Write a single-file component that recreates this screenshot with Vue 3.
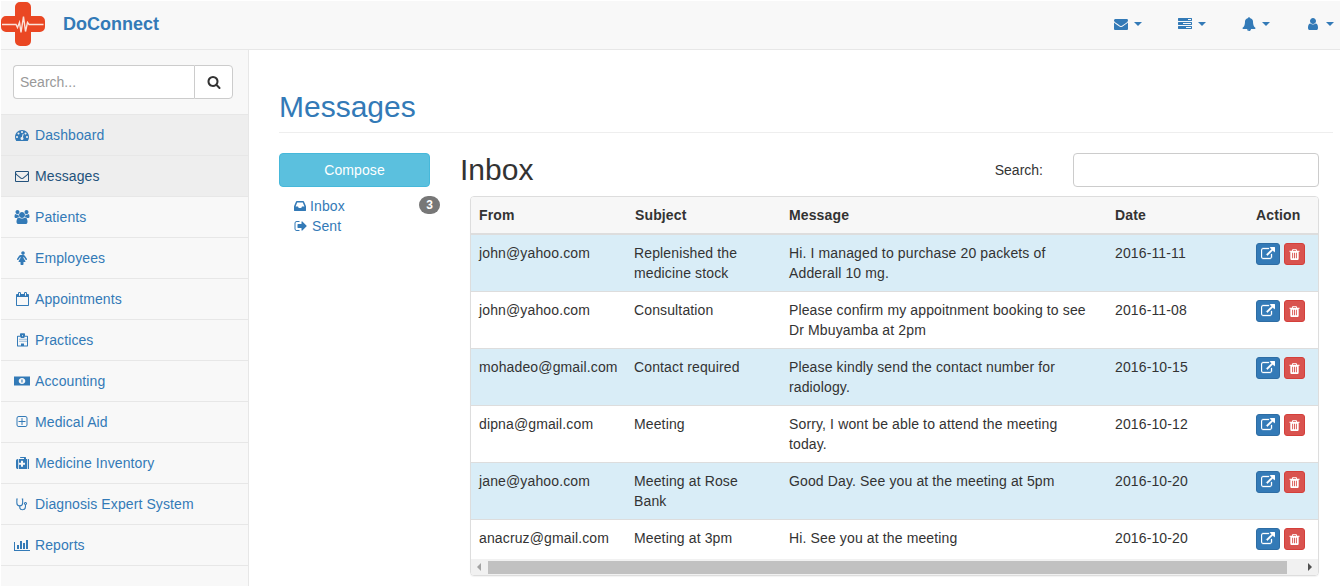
<script setup>
const P = {
  search: [1792, 'M1216 832q0-185-131.500-316.500t-316.500-131.500-316.500 131.500-131.500 316.500 131.500 316.500 316.500 131.500 316.500-131.500 131.500-316.500zm512 832q0 52-38 90t-90 38q-54 0-90-38l-343-342q-179 124-399 124-143 0-273.500-55.500t-225-150-150-225-55.500-273.500 55.500-273.500 150-225 225-150 273.500-55.500 273.500 55.500 225 150 150 225 55.500 273.500q0 220-124 399l343 343q37 37 37 90z'],
  envelope: [1792, 'M1792 710v794q0 66-47 113t-113 47h-1472q-66 0-113-47t-47-113v-794q44 49 101 87 362 246 497 345 57 42 92.500 65.500t94.500 48 110 24.500h2q51 0 110-24.500t94.500-48 92.500-65.500q170-123 498-345 57-39 100-87zm0-294q0 79-49 151t-122 123q-376 261-468 325-10 7-42.500 30.500t-54 38-52 32.500-57.500 27-50 9h-2q-23 0-50-9t-57.500-27-52-32.500-54-38-42.500-30.500q-91-64-262-182.500t-205-142.500q-62-42-117-115.500t-55-136.500q0-78 41.500-130t118.500-52h1472q65 0 112.500 47t47.500 113z'],
  envelopeO: [1792, 'M1664 1504v-768q-32 36-69 66-268 206-426 338-51 43-83 67t-86.500 48.500-102.500 24.500h-2q-48 0-102.500-24.500t-86.500-48.500-83-67q-158-132-426-338-37-30-69-66v768q0 13 9.500 22.500t22.500 9.500h1472q13 0 22.500-9.500t9.500-22.500zm0-1051v-24.500l-.5-13-3-12.500-5.500-9-9-7.500-14-2.500h-1472q-13 0-22.500 9.500t-9.500 22.500q0 168 147 284 193 152 401 317 6 5 35 29.500t46 37.500 44.500 31.500 50.500 27.500 43 9h2q20 0 43-9t50.500-27.500 44.500-31.500 46-37.500 35-29.500q208-165 401-317 54-43 100.500-115.500t46.500-131.500zm128-37v1088q0 66-47 113t-113 47h-1472q-66 0-113-47t-47-113v-1088q0-66 47-113t113-47h1472q66 0 113 47t47 113z'],
  user: [1792, 'M1536 1399q0 109-62.500 187t-150.500 78h-854q-88 0-150.500-78t-62.500-187q0-85 8.500-160.500t31.500-152 58.500-131 94-89 134.500-34.500q131 128 313 128t313-128q76 0 134.500 34.500t94 89 58.500 131 31.500 152 8.500 160.500zm-256-887q0 159-112.500 271.500t-271.500 112.500-271.500-112.500-112.500-271.500 112.500-271.500 271.500-112.500 271.500 112.500 112.500 271.500z'],
  bell: [1792, 'M912 1696q0-16-16-16-59 0-101.500-42.500t-42.500-101.500q0-16-16-16t-16 16q0 73 51.500 124.500t124.500 51.500q16 0 16-16zm816-288q0 52-38 90t-90 38h-448q0 106-75 181t-181 75-181-75-75-181h-448q-52 0-90-38t-38-90q50-42 91-88t85-119.500 74.500-158.500 50-206 19.500-260q0-152 117-282.500t307-158.500q-8-19-8-39 0-40 28-68t68-28 68 28 28 68q0 20-8 39 190 28 307 158.500t117 282.500q0 139 19.500 260t50 206 74.500 158.500 85 119.500 91 88z'],
  tasks: [1792, 'M1024 1408h640v-128h-640v128zm-384-512h1024v-128h-1024v128zm640-512h384v-128h-384v128zm512 832v256q0 26-19 45t-45 19h-1664q-26 0-45-19t-19-45v-256q0-26 19-45t45-19h1664q26 0 45 19t19 45zm0-512v256q0 26-19 45t-45 19h-1664q-26 0-45-19t-19-45v-256q0-26 19-45t45-19h1664q26 0 45 19t19 45zm0-512v256q0 26-19 45t-45 19h-1664q-26 0-45-19t-19-45v-256q0-26 19-45t45-19h1664q26 0 45 19t19 45z'],
  users: [2048, 'M657 896q-162 5-265 128h-134q-82 0-138-40.500t-56-118.500q0-353 124-353 6 0 43.500 21t97.500 42.500 119 21.500q67 0 133-23-5 37-5 66 0 139 81 256zm1071 637q0 120-73 189.500t-194 69.500h-874q-121 0-194-69.500t-73-189.500q0-53 3.500-103.500t14-109 26.500-108.500 43-97.500 62-81 85.500-53.500 111.500-20q10 0 43 21.500t73 48 107 48 135 21.500 135-21.500 107-48 73-48 43-21.500q61 0 111.500 20t85.500 53.500 62 81 43 97.500 26.500 108.500 14 109 3.500 103.500zm-1024-1277q0 106-75 181t-181 75-181-75-75-181 75-181 181-75 181 75 75 181zm704 384q0 159-112.500 271.500t-271.500 112.500-271.500-112.500-112.500-271.500 112.500-271.500 271.500-112.500 271.500 112.500 112.500 271.500zm576 225q0 78-56 118.500t-138 40.500h-134q-103-123-265-128 81-117 81-256 0-29-5-66 66 23 133 23 59 0 119-21.500t97.500-42.500 43.500-21q124 0 124 353zm-128-609q0 106-75 181t-181 75-181-75-75-181 75-181 181-75 181 75 75 181z'],
  link: [1792, 'M1408 928v320q0 119-84.500 203.500t-203.500 84.500h-832q-119 0-203.500-84.500t-84.500-203.500v-832q0-119 84.500-203.500t203.500-84.500h704q14 0 23 9t9 23v64q0 14-9 23t-23 9h-704q-66 0-113 47t-47 113v832q0 66 47 113t113 47h832q66 0 113-47t47-113v-320q0-14 9-23t23-9h64q14 0 23 9t9 23zm384-864v512q0 26-19 45t-45 19-45-19l-176-176-652 652q-10 10-23 10t-23-10l-114-114q-10-10-10-23t10-23l652-652-176-176q-19-19-19-45t19-45 45-19h512q26 0 45 19t19 45z'],
  trash: [1792, 'M704 1376v-704q0-14-9-23t-23-9h-64q-14 0-23 9t-9 23v704q0 14 9 23t23 9h64q14 0 23-9t9-23zm256 0v-704q0-14-9-23t-23-9h-64q-14 0-23 9t-9 23v704q0 14 9 23t23 9h64q14 0 23-9t9-23zm256 0v-704q0-14-9-23t-23-9h-64q-14 0-23 9t-9 23v704q0 14 9 23t23 9h64q14 0 23-9t9-23zm-544-992h448l-48-117q-7-9-17-11h-317q-10 2-17 11zm928 32v64q0 14-9 23t-23 9h-96v948q0 83-47 143.500t-113 60.500h-832q-66 0-113-58.500t-47-141.500v-952h-96q-14 0-23-9t-9-23v-64q0-14 9-23t23-9h309l70-167q15-37 54-63t79-26h320q40 0 79 26t54 63l70 167h309q14 0 23 9t9 23z'],
  dashboard: [1792, 'M384 1152q0-53-37.500-90.500t-90.500-37.500-90.500 37.500-37.500 90.500 37.500 90.500 90.500 37.500 90.500-37.500 37.500-90.500zm192-448q0-53-37.500-90.500t-90.500-37.500-90.500 37.500-37.500 90.500 37.500 90.500 90.500 37.500 90.500-37.500 37.500-90.500zm428 481l101-382q6-26-7.500-48.500t-38.500-29.500-48 6.500-30 39.500l-101 382q-60 5-107 43.500t-63 98.500q-20 77 20 146t117 89 146-20 89-117q16-60-6-117t-72-91zm660-33q0-53-37.500-90.500t-90.500-37.500-90.500 37.500-37.500 90.500 37.500 90.500 90.500 37.500 90.500-37.500 37.500-90.500zm-640-640q0-53-37.500-90.500t-90.500-37.500-90.500 37.500-37.500 90.500 37.500 90.500 90.500 37.500 90.500-37.500 37.500-90.500zm448 192q0-53-37.500-90.500t-90.500-37.500-90.500 37.500-37.500 90.500 37.500 90.500 90.500 37.500 90.500-37.500 37.500-90.500zm320 448q0 261-141 483-19 29-54 29h-1402q-35 0-54-29-141-221-141-483 0-182 71-348t191-286 286-191 348-71 348 71 286 191 191 286 71 348z'],
  female: [1280, 'M1280 1056q0 40-28 68t-68 28q-51 0-80-43l-227-341h-45v132l247 411q9 15 9 33 0 26-19 45t-45 19h-192v272q0 46-33 79t-79 33h-160q-46 0-79-33t-33-79v-272h-192q-26 0-45-19t-19-45q0-18 9-33l247-411v-132h-45l-227 341q-29 43-80 43-40 0-68-28t-28-68q0-29 16-53l256-384q73-107 176-107h384q103 0 176 107l256 384q16 24 16 53zm-288-800q0 93-65.500 158.500t-158.500 65.500-158.500-65.500-65.500-158.500 65.500-158.500 158.500-65.500 158.500 65.500 65.500 158.500z'],
  calendar: [1664, 'M128 1664h1408v-1024h-1408v1024zm384-1216v-288q0-14-9-23t-23-9h-64q-14 0-23 9t-9 23v288q0 14 9 23t23 9h64q14 0 23-9t9-23zm768 0v-288q0-14-9-23t-23-9h-64q-14 0-23 9t-9 23v288q0 14 9 23t23 9h64q14 0 23-9t9-23zm384-64v1280q0 52-38 90t-90 38h-1408q-52 0-90-38t-38-90v-1280q0-52 38-90t90-38h128v-96q0-66 47-113t113-47h64q66 0 113 47t47 113v96h384v-96q0-66 47-113t113-47h64q66 0 113 47t47 113v96h128q52 0 90 38t38 90z'],
  hospital: [1408, 'M0 1664v-1216q0-40 28-68t68-28h288v-224q0-40 28-68t68-28h448q40 0 68 28t28 68v224h288q40 0 68 28t28 68v1216q0 26-19 45t-45 19h-1280q-26 0-45-19t-19-45zm128-64h384v-224q0-13 9.500-22.500t22.500-9.500h320q13 0 22.500 9.500t9.500 22.500v224h384v-1120h-320v64q0 40-28 68t-68 28h-320q-40 0-68-28t-28-68v-64h-320v1120zm512-1184h128v-128h-128v128zm-320 320h128v128h-128v-128zm256 0h128v128h-128v-128zm256 0h128v128h-128v-128zm256 0h128v128h-128v-128zm-768 256h128v128h-128v-128zm256 0h128v128h-128v-128zm256 0h128v128h-128v-128zm256 0h128v128h-128v-128z'],
  money: [2048, 'M0 320h2048v1152h-2048zM1024 512c-260 0-420 180-420 384s160 384 420 384 420-180 420-384-160-384-420-384zM950 700h140v400h-140z'],
  plus: [1792, 'M1344 800v64q0 14-9 23t-23 9h-352v352q0 14-9 23t-23 9h-64q-14 0-23-9t-9-23v-352h-352q-14 0-23-9t-9-23v-64q0-14 9-23t23-9h352v-352q0-14 9-23t23-9h64q14 0 23 9t9 23v352h352q14 0 23 9t9 23zm128 448v-832q0-66-47-113t-113-47h-832q-66 0-113 47t-47 113v832q0 66 47 113t113 47h832q66 0 113-47t47-113zm128-832v832q0 119-84.500 203.500t-203.500 84.500h-832q-119 0-203.500-84.500t-84.500-203.500v-832q0-119 84.500-203.500t203.500-84.500h832q119 0 203.500 84.500t84.500 203.500z'],
  medkit: [1792, 'M1280 1088v-192q0-14-9-23t-23-9h-224v-224q0-14-9-23t-23-9h-192q-14 0-23 9t-9 23v224h-224q-14 0-23 9t-9 23v192q0 14 9 23t23 9h224v224q0 14 9 23t23 9h192q14 0 23-9t9-23v-224h224q14 0 23-9t9-23zm-640-704h512v-128h-512v128zm-256 0v1280h-32q-92 0-158-66t-66-158v-832q0-92 66-158t158-66h32zm1184 0v1280h-1088v-1280h160v-160q0-40 28-68t68-28h576q40 0 68 28t28 68v160h160zm352 224v832q0 92-66 158t-158 66h-32v-1280h32q92 0 158 66t66 158z'],
  stethoscope: [1536, 'M220 250H110V760C110 1010 290 1130 480 1130S850 1010 850 760V250H740M480 1130V1300C480 1520 620 1640 830 1640S1210 1520 1210 1260V1000M1210 700a130 130 0 1 0 .1 0z'],
  chart: [2048, 'M640 896v512h-256v-512h256zm384-512v1024h-256v-1024h256zm1024 1152v128h-2048v-1152h128v1024h1920zm-640-896v768h-256v-768h256zm384-384v1152h-256v-1152h256z'],
  inbox: [1536, 'M1023 960h316q-1-3-2.500-8.500t-2.500-7.500l-212-496h-708l-212 496q-1 3-2.500 8.500t-2.500 7.500h316l95 192h320zm513 30v482q0 26-19 45t-45 19h-1408q-26 0-45-19t-19-45v-482q0-62 25-123l238-552q10-25 36.500-42t52.500-17h832q26 0 52.500 17t36.500 42l238 552q25 61 25 123z'],
  signout: [1664, 'M704 1440q0 4 1 20t.5 26.500-3 23.500-10 19.500-20.500 6.500h-320q-119 0-203.500-84.500t-84.500-203.500v-704q0-119 84.500-203.500t203.500-84.500h320q13 0 22.500 9.500t9.500 22.500q0 4 1 20t.5 26.500-3 23.500-10 19.500-20.500 6.500h-320q-66 0-113 47t-47 113v704q0 66 47 113t113 47h312l11.500 1 11.500 3 8 5.500 7 9 2 13.500zm928-544q0 26-19 45l-544 544q-19 19-45 19t-45-19-19-45v-288h-448q-26 0-45-19t-19-45v-384q0-26 19-45t45-19h448v-288q0-26 19-45t45-19 45 19l544 544q19 19 19 45z']
}
const ic = (n, s = 14) => ({ name: n, vb: `0 0 ${P[n][0]} 1792`, d: P[n][1], w: (P[n][0] / 1792) * s, h: s })

const topIcons = ['envelope', 'tasks', 'bell', 'user'].map((n) => ic(n))
const nav = [
  ['Dashboard', 'dashboard'], ['Messages', 'envelopeO'], ['Patients', 'users'], ['Employees', 'female'],
  ['Appointments', 'calendar'], ['Practices', 'hospital'], ['Accounting', 'money'], ['Medical Aid', 'plus'],
  ['Medicine Inventory', 'medkit'], ['Diagnosis Expert System', 'stethoscope'], ['Reports', 'chart']
].map(([label, n]) => ({ label, icon: ic(n) }))
const rows = [
  ['john@yahoo.com', 'Replenished the medicine stock', 'Hi. I managed to purchase 20 packets of Adderall 10 mg.', '2016-11-11'],
  ['john@yahoo.com', 'Consultation', 'Please confirm my appoitnment booking to see Dr Mbuyamba at 2pm', '2016-11-08'],
  ['mohadeo@gmail.com', 'Contact required', 'Please kindly send the contact number for radiology.', '2016-10-15'],
  ['dipna@gmail.com', 'Meeting', 'Sorry, I wont be able to attend the meeting today.', '2016-10-12'],
  ['jane@yahoo.com', 'Meeting at Rose Bank', 'Good Day. See you at the meeting at 5pm', '2016-10-20'],
  ['anacruz@gmail.com', 'Meeting at 3pm', 'Hi. See you at the meeting', '2016-10-20']
]
const searchI = ic('search')
const inboxI = ic('inbox')
const sentI = ic('signout')
const shareI = ic('link', 14)
const trashI = ic('trash', 13)
</script>

<template>
  <div class="app">
    <header class="navbar">
      <svg class="logo" width="44" height="44" viewBox="0 0 44 44">
        <path d="M14 5a5 5 0 0 1 5-5h6a5 5 0 0 1 5 5v9h9a5 5 0 0 1 5 5v6a5 5 0 0 1-5 5h-9v9a5 5 0 0 1-5 5h-6a5 5 0 0 1-5-5v-9h-9a5 5 0 0 1-5-5v-6a5 5 0 0 1 5-5h9z" fill="#ea4723" />
        <path d="M1 22.500h14l1.500 3 2-5 1.500 10 2.500-16 2 15 2-9 1.500 2h14.500" fill="none" stroke="#fbe3da" stroke-width="1.400" />
      </svg>
      <span class="brand">DoConnect</span>
      <div class="top-links">
        <div v-for="(t, i) in topIcons" :key="i" class="top-link">
          <svg :width="t.w" :height="t.h" :viewBox="t.vb"><path :d="t.d" /></svg>
          <i class="caret"></i>
        </div>
      </div>
    </header>

    <div class="body">
      <aside class="sidebar">
        <div class="side-search">
          <input class="side-input" placeholder="Search..." />
          <button class="side-btn">
            <svg :width="searchI.w" :height="searchI.h" :viewBox="searchI.vb"><path :d="searchI.d" /></svg>
          </button>
        </div>
        <a v-for="(n, i) in nav" :key="n.label" class="nav-item" :class="{ hi: i < 2, cur: i === 1 }">
          <span class="nav-ic"><svg :class="{ outline: n.icon.name === 'stethoscope' }" :width="n.icon.w" :height="n.icon.h" :viewBox="n.icon.vb"><path :d="n.icon.d" /></svg></span>
          {{ n.label }}
        </a>
      </aside>

      <main class="main">
        <h1 class="page-title">Messages</h1>
        <div class="columns">
          <div class="left">
            <button class="compose">Compose</button>
            <ul class="folders">
              <li>
                <a><svg :width="inboxI.w" :height="inboxI.h" :viewBox="inboxI.vb"><path :d="inboxI.d" /></svg>Inbox</a>
                <span class="badge">3</span>
              </li>
              <li>
                <a class="sent"><svg :width="sentI.w" :height="sentI.h" :viewBox="sentI.vb"><path :d="sentI.d" /></svg>Sent</a>
              </li>
            </ul>
          </div>
          <div class="right">
            <div class="head">
              <h2 class="inbox-title">Inbox</h2>
              <label class="filter">Search:<input class="filter-input" /></label>
            </div>
            <div class="panel">
              <table class="grid">
                <colgroup>
                  <col style="width:155px" /><col style="width:155px" /><col style="width:326px" /><col style="width:141px" /><col style="width:70px" />
                </colgroup>
                <thead>
                  <tr>
                    <th>From</th><th class="subj">Subject</th><th>Message</th><th>Date</th><th>Action</th>
                  </tr>
                </thead>
                <tbody>
                  <tr v-for="(r, i) in rows" :key="i" :class="{ info: i % 2 === 0 }">
                    <td v-for="(c, j) in r" :key="j" :class="{ msg: j === 2 }">{{ c }}</td>
                    <td>
                      <div class="acts">
                        <span class="act blue"><svg class="bold" :width="shareI.w" :height="shareI.h" :viewBox="shareI.vb"><path :d="shareI.d" /></svg></span>
                        <span class="act red"><svg :width="trashI.w" :height="trashI.h" :viewBox="trashI.vb"><path :d="trashI.d" /></svg></span>
                      </div>
                    </td>
                  </tr>
                </tbody>
              </table>
              <div class="hscroll">
                <i class="arrow l"></i>
                <div class="thumb"></div>
                <i class="arrow r"></i>
              </div>
            </div>
          </div>
        </div>
      </main>
    </div>
  </div>
</template>

<style>
html, body { margin: 0; background: #fff; overflow: hidden; }
</style>

<style scoped>
.app {
  width: 1340px;
  height: 586px;
  box-sizing: border-box;
  padding: 1px 0 0 1px;
  overflow: hidden;
  font-family: "Liberation Sans", Arial, sans-serif;
  font-size: 14px;
  line-height: 20px;
  color: #333;
  display: flex;
  flex-direction: column;
}
svg { fill: currentColor; display: block; flex: none; }
svg.outline { fill: none; stroke: currentColor; stroke-width: 140; }
svg.bold { stroke: currentColor; stroke-width: 40; }
.navbar {
  height: 48px;
  flex: none;
  background: #f8f8f8;
  border-bottom: 1px solid #e7e7e7;
  display: flex;
  align-items: center;
  color: #337ab7;
}
.logo { align-self: flex-start; margin-top: 1px; }
.brand { margin: 0 0 2px 18px; font-size: 18px; font-weight: 700; }
.top-links { margin: 0 0 2px auto; display: flex; padding-right: 6px; }
.top-link { width: 64px; display: flex; align-items: center; gap: 6px; }
.top-link:last-child { width: auto; }
.caret { width: 0; height: 0; border-top: 4px solid #337ab7; border-left: 4px solid transparent; border-right: 4px solid transparent; }

.body { flex: 1; display: flex; min-height: 0; }
.sidebar {
  width: 247px;
  flex: none;
  background: #f8f8f8;
  border-right: 1px solid #e7e7e7;
}
.side-search {
  display: flex;
  padding: 15px 15px 15px 12px;
  border-bottom: 1px solid #e7e7e7;
}
.side-input {
  flex: 1;
  min-width: 0;
  height: 34px;
  box-sizing: border-box;
  border: 1px solid #ccc;
  border-right: 0;
  border-radius: 4px 0 0 4px;
  padding: 0 6px;
  font: inherit;
  background: #fff;
  outline: none;
}
.side-input::placeholder { color: #999; }
.side-btn {
  width: 39px;
  height: 34px;
  box-sizing: border-box;
  border: 1px solid #ccc;
  border-radius: 0 4px 4px 0;
  background: #fff;
  color: #333;
  display: flex;
  align-items: center;
  justify-content: center;
  padding: 0;
}
.nav-item {
  height: 40px;
  border-bottom: 1px solid #e7e7e7;
  display: flex;
  align-items: center;
  padding-left: 14px;
  color: #337ab7;
  letter-spacing: 0.1px;
}
.nav-item.hi { background: #eee; }
.nav-item.cur { color: #23527c; }
.nav-ic { width: 14px; margin-right: 6px; display: flex; justify-content: center; }

.main { flex: 1; min-width: 0; padding: 40px 7px 0 30px; }
.page-title {
  margin: 0 0 20px;
  padding-bottom: 9px;
  border-bottom: 1px solid #eee;
  font-size: 30px;
  line-height: 33px;
  font-weight: 500;
  color: #337ab7;
}
.columns { display: flex; padding-right: 14px; }
.left { width: 151px; flex: none; }
.compose {
  display: block;
  width: 100%;
  height: 34px;
  background: #5bc0de;
  border: 1px solid #46b8da;
  border-radius: 4px;
  color: #fff;
  font: inherit;
  letter-spacing: 0.1px;
  padding: 0;
}
.folders { list-style: none; margin: 9px -10px 0 15px; padding: 0; }
.folders li { display: flex; justify-content: space-between; height: 20px; }
.folders a { color: #337ab7; display: flex; align-items: center; gap: 4px; letter-spacing: 0.1px; }
.folders a.sent { gap: 5px; }
.badge {
  height: 18px;
  min-width: 21px;
  box-sizing: border-box;
  border-radius: 10px;
  background: #777;
  color: #fff;
  font-size: 12px;
  font-weight: 700;
  line-height: 18px;
  text-align: center;
}
.right { flex: 1; min-width: 0; margin-left: 30px; }
.head { display: flex; justify-content: space-between; align-items: flex-start; height: 34px; margin-bottom: 9px; }
.inbox-title { margin: 0; font-size: 30px; line-height: 33px; font-weight: 500; color: #333; }
.filter { display: flex; align-items: center; gap: 30px; }
.filter-input {
  width: 246px;
  height: 34px;
  box-sizing: border-box;
  border: 1px solid #ccc;
  border-radius: 4px;
  background: #fff;
  outline: none;
}
.panel {
  margin-left: 10px;
  border: 1px solid #ddd;
  border-radius: 4px;
  overflow: hidden;
  box-shadow: 0 1px 1px rgba(0, 0, 0, 0.05);
}
.grid { border-collapse: separate; border-spacing: 0; table-layout: fixed; width: 847px; letter-spacing: 0.13px; }
.grid th {
  text-align: left;
  font-weight: 700;
  padding: 8px;
  background: #f7f7f7;
  border-bottom: 2px solid #ddd;
}
.grid th.subj { padding-left: 9px; }
.grid td { padding: 8px; vertical-align: top; border-bottom: 1px solid #ddd; }
.grid td.msg { padding-right: 13px; }
.grid tr:last-child td { border-bottom: 0; padding-bottom: 9px; }
.grid tr.info td { background: #d9edf7; }
.acts { display: flex; gap: 4px; }
.act {
  height: 22px;
  box-sizing: border-box;
  border-radius: 3px;
  color: #fff;
  display: flex;
  align-items: center;
  justify-content: center;
}
.blue { width: 24px; background: #337ab7; border: 1px solid #2e6da4; }
.red { width: 21px; background: #d9534f; border: 1px solid #d43f3a; }
.hscroll { height: 16px; background: #f1f1f1; display: flex; align-items: center; }
.thumb { width: 799px; height: 13px; background: #c1c1c1; }
.arrow { width: 0; height: 0; border-top: 4px solid transparent; border-bottom: 4px solid transparent; }
.arrow.l { border-right: 4px solid #a3a3a3; margin: 0 7px 0 6px; }
.arrow.r { border-left: 4px solid #505050; margin-left: 21px; }
</style>
